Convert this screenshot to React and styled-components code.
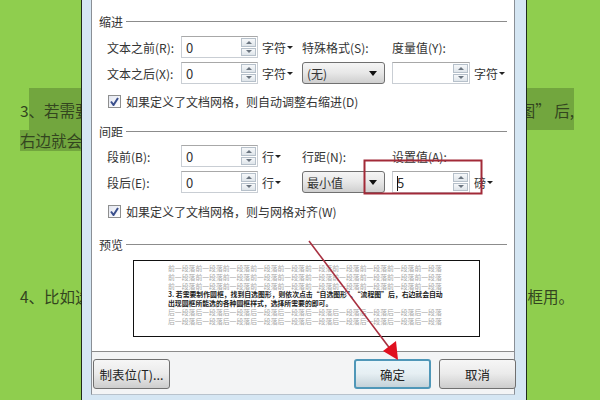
import React from 'react';
import styled, { createGlobalStyle } from 'styled-components';

const Global = createGlobalStyle`
  html, body { margin: 0; padding: 0; }
  body { width: 600px; height: 400px; overflow: hidden; background: #8fce4e; }
`;
const Page = styled.div`
  position: relative;
  width: 600px;
  height: 400px;
  overflow: hidden;
  background: #8fce4e;
  font-family: "Noto Sans CJK SC", "Liberation Sans", sans-serif;
  color: #33451f;
  padding-top: 88px;
  box-sizing: border-box;
`;
const DocLine = styled.div`
  display: flex;
  justify-content: space-between;
  height: ${p => p.$h || 21}px;
  padding: 0 26px 0 20px;
  margin-top: ${p => p.$top || 0}px;
  font-size: 15.5px;
  line-height: ${p => p.$h || 21}px;
`;
const Mark = styled.span`
  display: inline-block;
  background: #72a63e;
  height: ${p => p.$h || 21}px;
  line-height: ${p => p.$lh || 21}px;
`;
const Window = styled.div`
  position: absolute;
  left: 81px;
  top: -10px;
  width: 446px;
  height: 410px;
  box-sizing: border-box;
  border: 1px solid #1f2b1c;
  border-bottom: 0;
  background: #d5e6f3;
  padding: 0 11px 5px 9px;
  display: flex;
`;
const Content = styled.div`
  flex: 1;
  min-width: 0;
  background: #fff;
  border-left: 1px solid #8a8f96;
  border-right: 1px solid #8a8f96;
  border-bottom: 1px solid #b8c2cc;
  display: flex;
  flex-direction: column;
  font-size: 12px;
  color: #333;
  padding-top: 20px;
`;
const Body = styled.div`
  flex: 1;
  padding: 0 7px;
  border-bottom: 1px solid #8c8c8c;
`;
const Legend = styled.div`
  display: flex;
  align-items: center;
  gap: 3px;
  height: 20px;
  margin-bottom: ${p => p.$after || 0}px;
  margin-top: ${p => p.$before || 0}px;
  &::after {
    content: '';
    flex: 1;
    height: 1px;
    background: #8c8c8c;
  }
`;
const Grid = styled.div`
  display: grid;
  grid-template-columns: 74px 81px 40px 90px 1fr;
  grid-template-rows: 22px 22px;
  row-gap: 4px;
  padding-left: 8px;
  align-items: center;
`;
const SpinBox = styled.div`
  display: flex;
  align-items: center;
  justify-content: space-between;
  box-sizing: border-box;
  flex: none;
  width: ${p => p.$w || 77}px;
  height: 22px;
  border: 1px solid #c9ced4;
  border-top-color: #a8a8a8;
  background: #fff;
  padding: 0 1px 0 4px;
  font-size: 13px;
  color: #333;
`;
const Caret = styled.i`
  display: inline-block;
  width: 1px;
  height: 15px;
  vertical-align: middle;
  background: #111;
  margin-right: -1px;
`;
const Spin = styled.div`
  display: flex;
  flex-direction: column;
  gap: 1px;
  width: 15px;
  height: 18px;
`;
const SpinBtn = styled.div`
  flex: 1;
  display: flex;
  align-items: center;
  justify-content: center;
  border: 1px solid #b6c0ca;
  background: linear-gradient(#f6f8fa, #dfe5ea);
  &::after {
    content: '';
    border-left: 3px solid transparent;
    border-right: 3px solid transparent;
    ${p => (p.$down ? 'border-top: 3px solid #6b7580;' : 'border-bottom: 3px solid #6b7580;')}
  }
`;
const Unit = styled.span`
  display: inline-flex;
  align-items: center;
  gap: 1px;
  &::after {
    content: '';
    border-left: 3px solid transparent;
    border-right: 3px solid transparent;
    border-top: 3px solid #222;
  }
`;
const Field = styled.div`
  display: flex;
  align-items: center;
  gap: 4px;
`;
const SelectBox = styled.div`
  display: flex;
  align-items: center;
  justify-content: space-between;
  box-sizing: border-box;
  width: 83px;
  height: 22px;
  border: 1px solid #707070;
  border-radius: 3px;
  background: linear-gradient(#f5f5f5 0%, #e8e8e8 48%, #cfcfcf 100%);
  padding: 0 7px 0 4px;
  color: #333;
  &::after {
    content: '';
    border-left: 4px solid transparent;
    border-right: 4px solid transparent;
    border-top: 5px solid #111;
  }
`;
const Check = styled.label`
  display: flex;
  align-items: center;
  gap: 5px;
  height: 16px;
  padding-left: 9px;
  margin-top: ${p => p.$top || 0}px;
`;
const Tick = styled.span`
  box-sizing: border-box;
  width: 13px;
  height: 13px;
  border: 1px solid #8e8f8f;
  background: linear-gradient(135deg, #e3e6f0, #fff);
  display: flex;
  align-items: center;
  justify-content: center;
`;
const PreviewBox = styled.div`
  box-sizing: border-box;
  width: 347px;
  height: 77px;
  margin-left: 34px;
  margin-top: 6px;
  border: 1px solid #111;
  background: #fff;
  padding: 3px 36px 0 34px;
  overflow: hidden;
  font-size: 6.85px;
  line-height: 8.8px;
  color: #a8a8a8;
`;
const Strong = styled.div`
  color: #222;
  font-weight: 700;
`;
const Footer = styled.div`
  display: flex;
  align-items: center;
  height: 42px;
  padding: 2px 0 0 1px;
  box-sizing: border-box;
  background: #f3f4f5;
`;
const Btn = styled.button`
  box-sizing: border-box;
  flex: none;
  width: 77px;
  height: 30px;
  margin-left: ${p => p.$gap || 0}px;
  border: ${p => (p.$primary ? '2px solid #4f97b8' : '1px solid #707070')};
  border-radius: 3px;
  background: ${p =>
    p.$primary
      ? 'linear-gradient(#eaf6fb 0%, #e6eff3 48%, #c4d2d9 100%)'
      : 'linear-gradient(#f6f6f6 0%, #ebebeb 48%, #cdcdcd 100%)'};
  font: inherit;
  font-size: 12.5px;
  color: #222;
  padding: 0;
`;
const Annotation = styled.svg`
  position: absolute;
  left: 0;
  top: 0;
  pointer-events: none;
`;

const Spinner = ({ value, caret, w }) => (
  <SpinBox $w={w}>
    <span>{caret && <Caret />}{value}</span>
    <Spin>
      <SpinBtn />
      <SpinBtn $down />
    </Spin>
  </SpinBox>
);

const CheckRow = ({ children, top }) => (
  <Check $top={top}>
    <Tick>
      <svg width="9" height="9" viewBox="0 0 9 9">
        <path d="M1 4.5 L3.5 8 L8 1" fill="none" stroke="#3a4f8c" strokeWidth="2" />
      </svg>
    </Tick>
    {children}
  </Check>
);

const before = '前一段落'.repeat(30);
const after = '后一段落'.repeat(20);
const strong = '3. 若需要制作圆框\uFF0C找到自选图形\uFF0C则依次点击“自选图形”、“流程图”后\uFF0C右边就会自动出现圆框所能选的各种圆框样式\uFF0C选择所需要的即可。';

const App = () => (
  <Page>
    <Global />
    <DocLine $h={42}>
      <span>3<Mark $h={42} $lh={44}>、若需要</Mark></span>
      <Mark $h={42} $lh={44}>图” 后,</Mark>
    </DocLine>
    <DocLine>
      <Mark>右边就会</Mark>
    </DocLine>
    <DocLine $top={135}>
      <span>4、比如选</span>
      <span>框用。</span>
    </DocLine>
    <Window>
      <Content>
        <Body>
          <Legend $after={5}>缩进</Legend>
          <Grid>
            <span>文本之前(R):</span>
            <Spinner value="0" />
            <Unit>字符</Unit>
            <span>特殊格式(S):</span>
            <span>度量值(Y):</span>
            <span>文本之后(X):</span>
            <Spinner value="0" />
            <Unit>字符</Unit>
            <SelectBox>(无)</SelectBox>
            <Field>
              <Spinner w={78} />
              <Unit>字符</Unit>
            </Field>
          </Grid>
          <CheckRow top={9}>{'如果定义了文档网格\uFF0C则自动调整右缩进(D)'}</CheckRow>
          <Legend $before={12} $after={4}>间距</Legend>
          <Grid>
            <span>段前(B):</span>
            <Spinner value="0" />
            <Unit>行</Unit>
            <span>行距(N):</span>
            <span>设置值(A):</span>
            <span>段后(E):</span>
            <Spinner value="0" />
            <Unit>行</Unit>
            <SelectBox>最小值</SelectBox>
            <Field>
              <Spinner value="5" caret w={78} />
              <Unit>磅</Unit>
            </Field>
          </Grid>
          <CheckRow top={10}>{'如果定义了文档网格\uFF0C则与网格对齐(W)'}</CheckRow>
          <Legend $before={15}>预览</Legend>
          <PreviewBox>
            {before}
            <Strong>{strong}</Strong>
            {after}
          </PreviewBox>
        </Body>
        <Footer>
          <Btn>制表位(T)...</Btn>
          <Btn $gap={184} $primary>确定</Btn>
          <Btn $gap={8}>取消</Btn>
        </Footer>
      </Content>
    </Window>
    <Annotation width="600" height="400" viewBox="0 0 600 400">
      <rect x="364.5" y="160.5" width="117" height="33" fill="none" stroke="#a22a38" strokeWidth="2" />
      <line x1="309" y1="241" x2="391" y2="350" stroke="#a83040" strokeWidth="1.6" />
      <polygon points="398,360 383,351 396,341" fill="#e0101f" />
    </Annotation>
  </Page>
);

export default App;
